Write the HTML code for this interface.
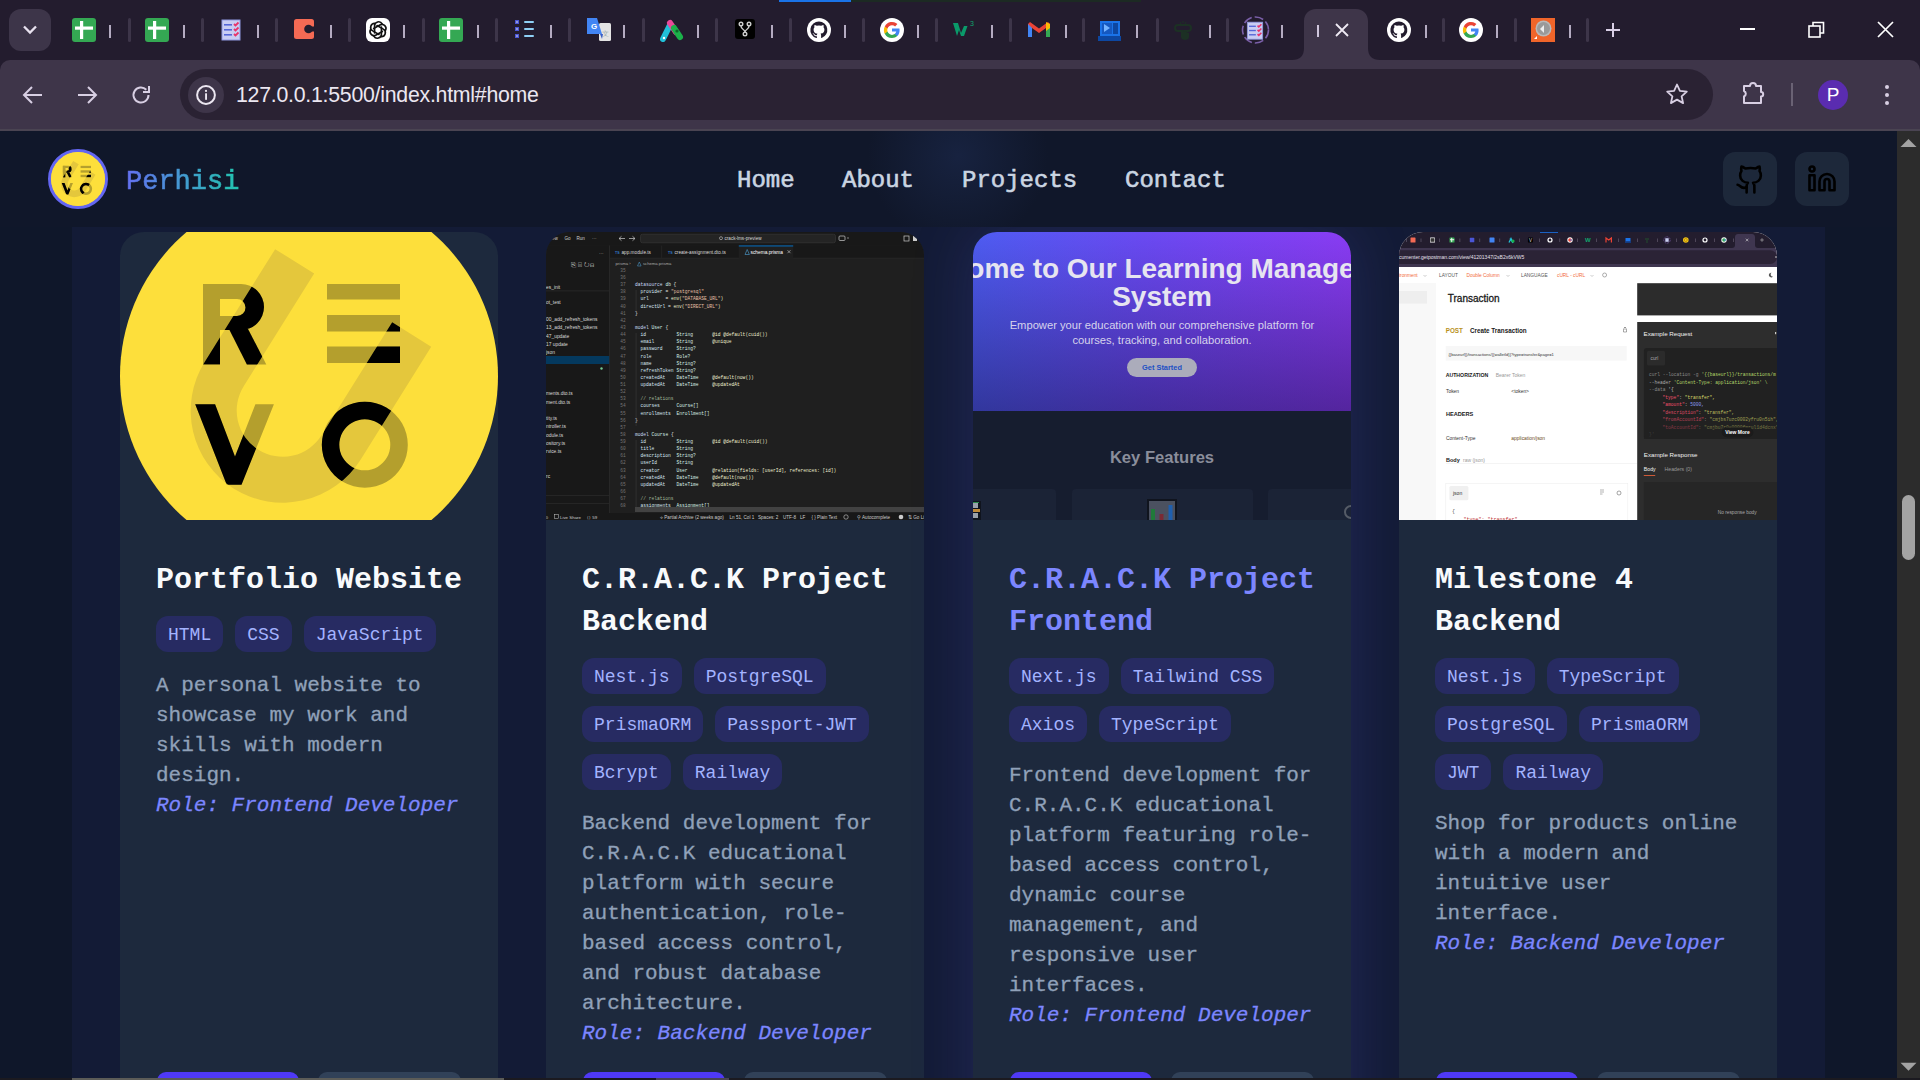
<!DOCTYPE html>
<html><head><meta charset="utf-8">
<style>
*{box-sizing:border-box;margin:0;padding:0}
html,body{width:1920px;height:1080px;overflow:hidden}
body{position:relative;background:#231c2e;font-family:"Liberation Sans",sans-serif}
.abs{position:absolute}
/* chrome */
#tabstrip{position:absolute;left:0;top:0;width:1920px;height:60px;background:#231c2e}
#toolbar{position:absolute;left:0;top:60px;width:1920px;height:71px;background:#3e3549;border-radius:10px 10px 0 0}
#omni{position:absolute;left:180px;top:69px;width:1533px;height:51px;border-radius:26px;background:#2a2233}
.sep{position:absolute;top:18px;width:3px;height:24px;border-radius:1.5px;background:#3d3549}
.fav{position:absolute;top:18px;width:24px;height:24px}
.tfrag{position:absolute;top:25px;width:2.2px;height:12.8px;background:#d8d0e6;opacity:.8}
/* page */
#page{position:absolute;left:0;top:131px;width:1897px;height:949px;background:#0f172a;overflow:hidden;font-family:"Liberation Mono",monospace}
#nav{position:absolute;left:0;top:0;width:1897px;height:96px;background:radial-gradient(circle 90px at 958px 25px,rgba(32,48,90,0.45),rgba(16,23,42,0)),#10172a}
.navlink{position:absolute;top:32px;font-size:24px;line-height:36px;color:#cad5e2;-webkit-text-stroke:0.6px #cad5e2}
.sbtn{position:absolute;top:21px;width:54px;height:54px;border-radius:12px;background:#1d283a}
#container{position:absolute;left:72px;top:96px;width:1753px;height:1000px;background:#131b36}
.card{position:absolute;top:101px;width:378px;height:1000px;background:#1d293d;border-radius:24px;overflow:hidden}
.img{position:absolute;left:0;top:0;width:378px;height:288px;overflow:hidden}
.body{position:absolute;left:36px;top:324px;width:308px}
.title{font-size:30px;line-height:42px;font-weight:bold;color:#f8fafc;position:relative;top:3px}
.tags{display:flex;flex-wrap:wrap;gap:12px;margin-top:18px}
.tag{font-size:18px;line-height:24px;padding:6px 12px;border-radius:12px;background:#272b62;color:#a3b3ff}
.tag span{position:relative;top:1px}
.desc{margin-top:18px;font-size:21px;line-height:30px;color:#90a1b9;-webkit-text-stroke:0.3px #90a1b9}
.desc span,.role span{position:relative;top:1px}
.role{font-size:21px;line-height:30px;color:#7c86ff;font-style:italic;-webkit-text-stroke:0.3px #7c86ff}
.btn1{position:absolute;left:37px;top:840px;height:45px;width:142px;border-radius:9px;background:#4f39f6}
.btn2{position:absolute;left:198px;top:840px;height:45px;width:143px;border-radius:9px;background:#314158}
</style></head>
<body>
<div id="tabstrip">
<div class="abs" style="left:779px;top:0;width:72px;height:2px;background:#1a73e8"></div>
<div class="abs" style="left:851px;top:0;width:290px;height:2px;background:#1c2a23"></div>
<div class="abs" style="left:9px;top:9px;width:42px;height:42px;border-radius:12px;background:#3d3549"></div>
<svg class="abs" style="left:20px;top:20px" width="20" height="20" viewBox="0 0 20 20"><path d="M4 6.5l6 6 6-6" fill="none" stroke="#e8e2ef" stroke-width="2.3"/></svg>
<div class="sep" style="left:127.9px"></div>
<div class="sep" style="left:201.3px"></div>
<div class="sep" style="left:274.7px"></div>
<div class="sep" style="left:348.1px"></div>
<div class="sep" style="left:421.5px"></div>
<div class="sep" style="left:494.9px"></div>
<div class="sep" style="left:568.3px"></div>
<div class="sep" style="left:641.7px"></div>
<div class="sep" style="left:715.1px"></div>
<div class="sep" style="left:788.5px"></div>
<div class="sep" style="left:861.9px"></div>
<div class="sep" style="left:935.3px"></div>
<div class="sep" style="left:1008.7px"></div>
<div class="sep" style="left:1082.1px"></div>
<div class="sep" style="left:1155.5px"></div>
<div class="sep" style="left:1226.0px"></div>
<div class="sep" style="left:1441.9px"></div>
<div class="sep" style="left:1513.9px"></div>
<div class="sep" style="left:1586.0px"></div>
<div class="tfrag" style="left:109.0px"></div>
<div class="tfrag" style="left:182.8px"></div>
<div class="tfrag" style="left:256.5px"></div>
<div class="tfrag" style="left:330.0px"></div>
<div class="tfrag" style="left:403.0px"></div>
<div class="tfrag" style="left:476.5px"></div>
<div class="tfrag" style="left:549.6px"></div>
<div class="tfrag" style="left:623.0px"></div>
<div class="tfrag" style="left:696.5px"></div>
<div class="tfrag" style="left:771.0px"></div>
<div class="tfrag" style="left:844.0px"></div>
<div class="tfrag" style="left:917.0px"></div>
<div class="tfrag" style="left:991.0px"></div>
<div class="tfrag" style="left:1064.6px"></div>
<div class="tfrag" style="left:1136.0px"></div>
<div class="tfrag" style="left:1208.6px"></div>
<div class="tfrag" style="left:1280.5px"></div>
<div class="tfrag" style="left:1424.6px"></div>
<div class="tfrag" style="left:1496.0px"></div>
<div class="tfrag" style="left:1568.6px"></div>
<svg class="abs" style="left:72.0px;top:18px" width="24" height="24" viewBox="0 0 24 24"><rect x="0" y="0" width="24" height="24" rx="3" fill="#34a853"/><rect x="3" y="8.5" width="18" height="3.2" fill="#fff"/><rect x="8" y="3" width="3.2" height="18" fill="#fff"/></svg>
<svg class="abs" style="left:145.4px;top:18px" width="24" height="24" viewBox="0 0 24 24"><rect x="0" y="0" width="24" height="24" rx="3" fill="#34a853"/><rect x="3" y="8.5" width="18" height="3.2" fill="#fff"/><rect x="8" y="3" width="3.2" height="18" fill="#fff"/></svg>
<svg class="abs" style="left:221.0px;top:18px" width="24" height="24" viewBox="0 0 24 24"><rect x="1" y="2" width="18" height="20" fill="#c9cdf3"/><rect x="1" y="2" width="18" height="20" fill="none" stroke="#8f97e0" stroke-width="1"/><rect x="3" y="6" width="8" height="1.6" fill="#5567d8"/><rect x="3" y="11" width="8" height="1.6" fill="#5567d8"/><rect x="3" y="16" width="8" height="1.6" fill="#5567d8"/><path d="M13 6l1.5 1.5 3-3M13 11l1.5 1.5 3-3M13 16l1.5 1.5 3-3" fill="none" stroke="#e8336b" stroke-width="1.8"/></svg>
<svg class="abs" style="left:294.0px;top:18px" width="24" height="24" viewBox="0 0 24 24"><rect x="0" y="1" width="20" height="20" rx="2.5" fill="#f46a54"/><circle cx="14.5" cy="11" r="4.3" fill="#231c2e"/><rect x="14.5" y="8.5" width="6" height="5" fill="#231c2e"/></svg>
<svg class="abs" style="left:366.0px;top:18px" width="24" height="24" viewBox="0 0 24 24"><rect x="0" y="0" width="24" height="24" rx="6" fill="#fff"/><g transform="translate(12 12) scale(1.22) translate(-12 -12)" fill="none" stroke="#111" stroke-width="1.35" stroke-linecap="round"><path d="M9.2 14.5V8.6a3.3 3.3 0 0 1 6.2-1.6" transform="rotate(0 12 12)"/><path d="M9.2 14.5V8.6a3.3 3.3 0 0 1 6.2-1.6" transform="rotate(60 12 12)"/><path d="M9.2 14.5V8.6a3.3 3.3 0 0 1 6.2-1.6" transform="rotate(120 12 12)"/><path d="M9.2 14.5V8.6a3.3 3.3 0 0 1 6.2-1.6" transform="rotate(180 12 12)"/><path d="M9.2 14.5V8.6a3.3 3.3 0 0 1 6.2-1.6" transform="rotate(240 12 12)"/><path d="M9.2 14.5V8.6a3.3 3.3 0 0 1 6.2-1.6" transform="rotate(300 12 12)"/></g></svg>
<svg class="abs" style="left:439.0px;top:18px" width="24" height="24" viewBox="0 0 24 24"><rect x="0" y="0" width="24" height="24" rx="3" fill="#34a853"/><rect x="3" y="8.5" width="18" height="3.2" fill="#fff"/><rect x="8" y="3" width="3.2" height="18" fill="#fff"/></svg>
<svg class="abs" style="left:515.0px;top:18px" width="24" height="24" viewBox="0 0 24 24"><rect x="0" y="2" width="4" height="4" fill="#4a56d6"/><rect x="0" y="9" width="4" height="4" fill="#4a56d6"/><rect x="0" y="16" width="4" height="4" fill="#4a56d6"/><rect x="1.3" y="3.3" width="1.4" height="1.4" fill="#ddd"/><rect x="1.3" y="10.3" width="1.4" height="1.4" fill="#ddd"/><rect x="1.3" y="17.3" width="1.4" height="1.4" fill="#ddd"/><rect x="9" y="3" width="10" height="2" rx="1" fill="#8fd0f5"/><rect x="9" y="10" width="10" height="2" rx="1" fill="#8fd0f5"/><rect x="9" y="17" width="10" height="2" rx="1" fill="#8fd0f5"/></svg>
<svg class="abs" style="left:587.0px;top:18px" width="24" height="24" viewBox="0 0 24 24"><rect x="12" y="5" width="12" height="18" rx="1.5" fill="#e4e4e4"/><path d="M0 0h10l5 16H0z" fill="#4285f4"/><path d="M13 16l2 5 1-5z" fill="#3a5fc8"/><text x="4" y="11" font-size="8" font-family="Liberation Sans" font-weight="bold" fill="#fff">G</text><text x="15" y="18" font-size="7" font-family="Liberation Sans" fill="#9aa">文</text></svg>
<svg class="abs" style="left:660.0px;top:18px" width="24" height="24" viewBox="0 0 24 24"><path d="M3 21L10 7" stroke="#21c0d8" stroke-width="6" stroke-linecap="round"/><path d="M10 5L16 14" stroke="#e94a9a" stroke-width="6" stroke-linecap="round"/><path d="M14 10L20 19" stroke="#1bb24a" stroke-width="6" stroke-linecap="round"/><circle cx="4" cy="20" r="1.2" fill="#fff"/><circle cx="17" cy="13" r="1.6" fill="#0a6b2a"/></svg>
<svg class="abs" style="left:735.0px;top:18px" width="24" height="24" viewBox="0 0 24 24"><rect x="0" y="1" width="20" height="20" rx="3" fill="#000"/><g fill="none" stroke="#ccc" stroke-width="1.4"><circle cx="6" cy="6" r="1.8"/><circle cx="14" cy="6" r="1.8"/><circle cx="10" cy="16" r="1.8"/><path d="M6 8c0 4 4 3 4 6M14 8c0 4-4 3-4 6"/></g></svg>
<svg class="abs" style="left:807.0px;top:18px" width="24" height="24" viewBox="0 0 24 24"><circle cx="12" cy="12" r="12" fill="#fff"/><path d="M12 3.5a8.5 8.5 0 0 0-2.7 16.6c.4.1.6-.2.6-.4v-1.5c-2.4.5-2.9-1.1-2.9-1.1-.4-1-1-1.3-1-1.3-.8-.5.1-.5.1-.5.9.1 1.3.9 1.3.9.8 1.3 2 1 2.5.7.1-.6.3-1 .6-1.2-1.9-.2-3.9-.9-3.9-4.2 0-.9.3-1.7.9-2.3-.1-.2-.4-1.1.1-2.3 0 0 .7-.2 2.3.9a8 8 0 0 1 4.2 0c1.6-1.1 2.3-.9 2.3-.9.5 1.2.2 2.1.1 2.3.5.6.9 1.4.9 2.3 0 3.3-2 4-3.9 4.2.3.3.6.8.6 1.6v2.3c0 .2.2.5.6.4A8.5 8.5 0 0 0 12 3.5z" fill="#231c2e"/></svg>
<svg class="abs" style="left:880.0px;top:18px" width="24" height="24" viewBox="0 0 24 24"><circle cx="12" cy="12" r="12" fill="#fff"/><path d="M19.6 12.2c0-.6-.1-1.1-.2-1.6H12v3h4.3a3.7 3.7 0 0 1-1.6 2.4v2h2.6c1.5-1.4 2.3-3.4 2.3-5.8z" fill="#4285f4"/><path d="M12 20c2.2 0 4-.7 5.3-1.9l-2.6-2c-.7.5-1.6.8-2.7.8-2.1 0-3.9-1.4-4.5-3.3H4.8v2.1A8 8 0 0 0 12 20z" fill="#34a853"/><path d="M7.5 13.6a4.8 4.8 0 0 1 0-3.1V8.4H4.8a8 8 0 0 0 0 7.3z" fill="#fbbc05"/><path d="M12 7.2c1.2 0 2.3.4 3.1 1.2l2.3-2.3A8 8 0 0 0 4.8 8.4l2.7 2.1C8.1 8.6 9.9 7.2 12 7.2z" fill="#ea4335"/></svg>
<svg class="abs" style="left:953.0px;top:18px" width="24" height="24" viewBox="0 0 24 24"><path d="M0 5h5l3 10 3-7h3.5l-3.5 10 2 0-2 0h-3l-2-6-2 6h0z" fill="#0a9a6a"/><path d="M1 5l6 13h3l3-8 3 8 5-13" fill="none" stroke="#10a56f" stroke-width="0"/><text x="17" y="8" font-size="7" font-family="Liberation Sans" fill="#10a56f">3</text></svg>
<svg class="abs" style="left:1027.0px;top:18px" width="24" height="24" viewBox="0 0 24 24"><path d="M1 6v13h4V10l7 5 7-5v9h4V6l-2-2-9 6.5L3 4z" fill="#ea4335"/><path d="M1 6v13h4V10z" fill="#4285f4"/><path d="M23 6v13h-4V10z" fill="#34a853"/><path d="M19 4l4 2v4l-4 3z" fill="#fbbc05"/></svg>
<svg class="abs" style="left:1097.0px;top:18px" width="24" height="24" viewBox="0 0 24 24"><rect x="3" y="3" width="20" height="15" fill="#1a73e8"/><rect x="5" y="5" width="10" height="11" fill="#1558c0"/><path d="M7 6l6 4-6 4z" fill="#74b3ff"/><rect x="16" y="5" width="5" height="11" fill="#0d47a1"/><rect x="1" y="18" width="24" height="5" fill="#0d47a1"/></svg>
<svg class="abs" style="left:1173.0px;top:18px" width="24" height="24" viewBox="0 0 24 24"><rect x="2" y="7" width="16" height="6" rx="3" fill="none" stroke="#1c3024" stroke-width="2"/><path d="M8 12v7c0 2 2 3 4 3s4-1 4-3v-4" fill="#1c3024"/><path d="M7 4l1 2M10 3v2M13 4l-1 2" stroke="#1c3024" stroke-width="1"/></svg>
<svg class="abs" style="left:1387.0px;top:18px" width="24" height="24" viewBox="0 0 24 24"><circle cx="12" cy="12" r="12" fill="#fff"/><path d="M12 3.5a8.5 8.5 0 0 0-2.7 16.6c.4.1.6-.2.6-.4v-1.5c-2.4.5-2.9-1.1-2.9-1.1-.4-1-1-1.3-1-1.3-.8-.5.1-.5.1-.5.9.1 1.3.9 1.3.9.8 1.3 2 1 2.5.7.1-.6.3-1 .6-1.2-1.9-.2-3.9-.9-3.9-4.2 0-.9.3-1.7.9-2.3-.1-.2-.4-1.1.1-2.3 0 0 .7-.2 2.3.9a8 8 0 0 1 4.2 0c1.6-1.1 2.3-.9 2.3-.9.5 1.2.2 2.1.1 2.3.5.6.9 1.4.9 2.3 0 3.3-2 4-3.9 4.2.3.3.6.8.6 1.6v2.3c0 .2.2.5.6.4A8.5 8.5 0 0 0 12 3.5z" fill="#231c2e"/></svg>
<svg class="abs" style="left:1459.0px;top:18px" width="24" height="24" viewBox="0 0 24 24"><circle cx="12" cy="12" r="12" fill="#fff"/><path d="M19.6 12.2c0-.6-.1-1.1-.2-1.6H12v3h4.3a3.7 3.7 0 0 1-1.6 2.4v2h2.6c1.5-1.4 2.3-3.4 2.3-5.8z" fill="#4285f4"/><path d="M12 20c2.2 0 4-.7 5.3-1.9l-2.6-2c-.7.5-1.6.8-2.7.8-2.1 0-3.9-1.4-4.5-3.3H4.8v2.1A8 8 0 0 0 12 20z" fill="#34a853"/><path d="M7.5 13.6a4.8 4.8 0 0 1 0-3.1V8.4H4.8a8 8 0 0 0 0 7.3z" fill="#fbbc05"/><path d="M12 7.2c1.2 0 2.3.4 3.1 1.2l2.3-2.3A8 8 0 0 0 4.8 8.4l2.7 2.1C8.1 8.6 9.9 7.2 12 7.2z" fill="#ea4335"/></svg>
<svg class="abs" style="left:1531.0px;top:18px" width="24" height="24" viewBox="0 0 24 24"><rect x="0" y="0" width="24" height="24" fill="#f0652a"/><circle cx="12.5" cy="10.5" r="8" fill="#b9b9b9"/><circle cx="12.5" cy="10.5" r="6.5" fill="#9a9a9a"/><path d="M9 11l4-4v8z" fill="#eee"/><path d="M3 21l3-3v3z" fill="#fff"/></svg>
<svg class="abs" style="left:1240.5px;top:15px" width="30" height="30" viewBox="0 0 30 30"><circle cx="14.5" cy="15" r="13" fill="none" stroke="#7a5fa8" stroke-width="1.6" stroke-dasharray="9 3"/><g transform="translate(5.5 5.5) scale(0.85)"><rect x="1" y="2" width="18" height="20" fill="#c9cdf3"/><rect x="1" y="2" width="18" height="20" fill="none" stroke="#8f97e0" stroke-width="1"/><rect x="3" y="6" width="8" height="1.6" fill="#5567d8"/><rect x="3" y="11" width="8" height="1.6" fill="#5567d8"/><rect x="3" y="16" width="8" height="1.6" fill="#5567d8"/><path d="M13 6l1.5 1.5 3-3M13 11l1.5 1.5 3-3M13 16l1.5 1.5 3-3" fill="none" stroke="#e8336b" stroke-width="1.8"/></g></svg>
<svg class="abs" style="left:1292px;top:9px" width="88" height="51" viewBox="0 0 88 51"><path d="M0 51c8 0 12-4 12-12V12C12 5 17 0 24 0h40c7 0 12 5 12 12v27c0 8 4 12 12 12z" fill="#3e3549"/></svg>
<div class="abs" style="left:1316.5px;top:25px;width:2px;height:12px;background:#cfc6dc"></div>
<svg class="abs" style="left:1334px;top:22px" width="16" height="16" viewBox="0 0 16 16"><path d="M2 2l12 12M14 2L2 14" stroke="#efeaf3" stroke-width="1.8"/></svg>
<svg class="abs" style="left:1605px;top:22px" width="16" height="16" viewBox="0 0 16 16"><path d="M8 1v14M1 8h14" stroke="#d9cfe6" stroke-width="2"/></svg>
<div class="abs" style="left:1740px;top:28px;width:15px;height:2px;background:#fff"></div>
<svg class="abs" style="left:1808px;top:21px" width="17" height="17" viewBox="0 0 17 17"><rect x="1" y="5" width="11" height="11" fill="none" stroke="#fff" stroke-width="1.6"/><path d="M5 5V1.5h10.5V12H12" fill="none" stroke="#fff" stroke-width="1.6"/></svg>
<svg class="abs" style="left:1877px;top:21px" width="17" height="17" viewBox="0 0 17 17"><path d="M1 1l15 15M16 1L1 16" stroke="#fff" stroke-width="1.7"/></svg>
</div>
<div id="toolbar"></div>
<div class="abs" style="left:0;top:129px;width:1920px;height:2px;background:#4a4452"></div>
<div id="omni"></div>
<svg class="abs" style="left:22px;top:84px" width="22" height="22" viewBox="0 0 22 22"><path d="M20 11H3M10 3l-8 8 8 8" fill="none" stroke="#d8cfe3" stroke-width="2"/></svg>
<svg class="abs" style="left:76px;top:84px" width="22" height="22" viewBox="0 0 22 22"><path d="M2 11h17M12 3l8 8-8 8" fill="none" stroke="#d8cfe3" stroke-width="2"/></svg>
<svg class="abs" style="left:130px;top:84px" width="22" height="22" viewBox="0 0 22 22"><path d="M18.5 11a7.5 7.5 0 1 1-2.2-5.3" fill="none" stroke="#d8cfe3" stroke-width="2"/><path d="M19 2v6h-6" fill="none" stroke="#d8cfe3" stroke-width="2"/></svg>
<div class="abs" style="left:187.5px;top:76.5px;width:36px;height:36px;border-radius:18px;background:#3e3549"></div>
<svg class="abs" style="left:195.5px;top:85px" width="20" height="20" viewBox="0 0 20 20"><circle cx="10" cy="10" r="8.9" fill="none" stroke="#ece7f1" stroke-width="2"/><rect x="9.1" y="8.3" width="1.9" height="6.5" fill="#ece7f1"/><circle cx="10" cy="5.9" r="1.1" fill="#ece7f1"/></svg>
<div class="abs" id="url" style="left:236px;top:82px;font-size:21.3px;letter-spacing:-0.25px;line-height:26px;color:#ece7f1;font-family:'Liberation Sans',sans-serif">127.0.0.1:5500/index.html#home</div>
<svg class="abs" style="left:1665px;top:82px" width="24" height="24" viewBox="0 0 24 24"><path d="M12 2.5l2.9 6.4 6.9.7-5.2 4.7 1.5 6.8L12 17.6l-6.1 3.5 1.5-6.8-5.2-4.7 6.9-.7z" fill="none" stroke="#d8cfe3" stroke-width="1.8" stroke-linejoin="round"/></svg>
<svg class="abs" style="left:1741px;top:81px" width="26" height="26" viewBox="0 0 26 26"><path d="M3 5h6a3 3 0 0 1 6 0h5v6a2.2 2.2 0 0 1 0 4.4V22H3v-6.5a3 3 0 0 0 0-5.5z" fill="none" stroke="#d8cfe3" stroke-width="2" stroke-linejoin="round"/></svg>
<div class="abs" style="left:1791px;top:83px;width:2px;height:23px;background:#6a6274"></div>
<div class="abs" style="left:1818px;top:80px;width:30px;height:30px;border-radius:15px;background:#5a2cb0"></div>
<div class="abs" style="left:1818px;top:80px;width:30px;height:30px;line-height:30px;text-align:center;color:#fff;font-size:19px;font-family:'Liberation Sans',sans-serif">P</div>
<div class="abs" style="left:1884.7px;top:84.7px;width:4.6px;height:4.6px;border-radius:50%;background:#d8cfe3"></div>
<div class="abs" style="left:1884.7px;top:92.7px;width:4.6px;height:4.6px;border-radius:50%;background:#d8cfe3"></div>
<div class="abs" style="left:1884.7px;top:100.7px;width:4.6px;height:4.6px;border-radius:50%;background:#d8cfe3"></div>

<div id="page">
  <div id="container"></div>
  <!-- cards -->
  <div class="card" style="left:120px">
    <div class="img" id="img1"><svg width="378" height="288" viewBox="0 0 378 288" style="display:block"><defs><clipPath id="uclip"><path d="M70.69999999999999 45.7V178.7A92 92 0 0 0 254.7 178.7V45.7H208.7V178.7A46 46 0 0 1 116.69999999999999 178.7V45.7Z" transform="rotate(32 162.7 178.7)"/></clipPath></defs><circle cx="189" cy="144" r="189" fill="#fddf3b"/><path d="M70.69999999999999 45.7V178.7A92 92 0 0 0 254.7 178.7V45.7H208.7V178.7A46 46 0 0 1 116.69999999999999 178.7V45.7Z" transform="rotate(32 162.7 178.7)" fill="#e4c73c"/><g fill="#b49f2d"><rect x="83" y="52" width="17" height="80.4"/><path d="M83 52H121A23 23 0 0 1 121 98H83ZM100 67H117A8.5 8.5 0 0 1 117 84H100Z" fill-rule="evenodd"/><path d="M109 97L128 97L146.3 132.4L126.9 132.4Z"/><rect x="207" y="52" width="73" height="15.5"/><rect x="207" y="83" width="73" height="16.5"/><rect x="207" y="114.5" width="73" height="16.5"/><path d="M75.2 172.3L95.1 172.3L115 224.6L135.4 172.3L153.9 172.3L121.5 252.8L106.7 252.8Z"/><path d="M244.8 169.8a43 43 0 1 0 0.01 0ZM244.8 187.3a25.5 25.5 0 1 1-0.01 0Z" fill-rule="evenodd"/></g><g fill="#000" clip-path="url(#uclip)"><rect x="83" y="52" width="17" height="80.4"/><path d="M83 52H121A23 23 0 0 1 121 98H83ZM100 67H117A8.5 8.5 0 0 1 117 84H100Z" fill-rule="evenodd"/><path d="M109 97L128 97L146.3 132.4L126.9 132.4Z"/><rect x="207" y="52" width="73" height="15.5"/><rect x="207" y="83" width="73" height="16.5"/><rect x="207" y="114.5" width="73" height="16.5"/><path d="M75.2 172.3L95.1 172.3L115 224.6L135.4 172.3L153.9 172.3L121.5 252.8L106.7 252.8Z"/><path d="M244.8 169.8a43 43 0 1 0 0.01 0ZM244.8 187.3a25.5 25.5 0 1 1-0.01 0Z" fill-rule="evenodd"/></g></svg></div>
    <div class="body">
      <div class="title">Portfolio Website</div>
      <div class="tags"><div class="tag"><span>HTML</span></div><div class="tag"><span>CSS</span></div><div class="tag"><span>JavaScript</span></div></div>
      <div class="desc"><span>A personal website to showcase my work and skills with modern design.</span></div>
      <div class="role"><span>Role: Frontend Developer</span></div>
    </div>
    <div class="btn1"></div><div class="btn2"></div>
  </div>
  <div class="card" style="left:546px">
    <div class="img" id="img2"><svg width="378" height="288" viewBox="0 0 378 288" style="display:block"><rect width="378" height="288" fill="#1f1f1f"/><rect width="378" height="13.5" fill="#181818"/><text x="6.0" y="8.3" font-size="4.60" fill="#cccccc" text-anchor="start" font-weight="normal" font-family="Liberation Sans">ew</text><text x="18.5" y="8.3" font-size="4.60" fill="#cccccc" text-anchor="start" font-weight="normal" font-family="Liberation Sans">Go</text><text x="30.5" y="8.3" font-size="4.60" fill="#cccccc" text-anchor="start" font-weight="normal" font-family="Liberation Sans">Run</text><text x="46.0" y="8.3" font-size="4.60" fill="#cccccc" text-anchor="start" font-weight="normal" font-family="Liberation Sans">···</text><path d="M73 6.5h6M73 6.5l2.5-2.2M73 6.5l2.5 2.2M83 6.5h6M89 6.5l-2.5-2.2M89 6.5l-2.5 2.2" stroke="#cccccc" stroke-width="0.7" fill="none"/><rect x="94.5" y="2.2" width="195" height="8.6" rx="2" fill="#242424" stroke="#3a3a3a" stroke-width="0.6"/><circle cx="175" cy="6.2" r="1.5" fill="none" stroke="#ccc" stroke-width="0.6"/><text x="178.5" y="8.2" font-size="4.60" fill="#d8d8d8" text-anchor="start" font-weight="normal" font-family="Liberation Sans">crack-lms-preview</text><rect x="293" y="4" width="6" height="4.5" rx="1" fill="none" stroke="#ccc" stroke-width="0.7"/><path d="M301 6h2" stroke="#ccc" stroke-width="0.6"/><rect x="358" y="4" width="5" height="5" fill="none" stroke="#ccc" stroke-width="0.7"/><rect x="367" y="4" width="4" height="5" fill="#ccc"/><rect x="0" y="13.5" width="63.2" height="267.5" fill="#181818"/><rect x="63.2" y="13.5" width="0.8" height="267.5" fill="#2b2b2b"/><text x="53.0" y="23.0" font-size="4.60" fill="#cccccc" text-anchor="start" font-weight="normal" font-family="Liberation Sans">···</text><text x="25.0" y="35.0" font-size="6.50" fill="#dddddd" text-anchor="start" font-weight="normal" font-family="Liberation Sans">⎘ ⌸ ↻ ⊟</text><rect x="0" y="58.5" width="63" height="0.8" fill="#2b2b2b"/><text x="0.0" y="56.5" font-size="4.90" fill="#dadada" text-anchor="start" font-weight="normal" font-family="Liberation Sans">es_init</text><text x="0.0" y="72.0" font-size="4.90" fill="#dadada" text-anchor="start" font-weight="normal" font-family="Liberation Sans">ot_test</text><text x="0.0" y="89.0" font-size="4.90" fill="#dadada" text-anchor="start" font-weight="normal" font-family="Liberation Sans">00_add_refresh_tokens</text><text x="0.0" y="97.0" font-size="4.90" fill="#dadada" text-anchor="start" font-weight="normal" font-family="Liberation Sans">13_add_refresh_tokens</text><text x="0.0" y="105.5" font-size="4.90" fill="#dadada" text-anchor="start" font-weight="normal" font-family="Liberation Sans">47_update</text><text x="0.0" y="114.0" font-size="4.90" fill="#dadada" text-anchor="start" font-weight="normal" font-family="Liberation Sans">17 update</text><text x="0.0" y="122.0" font-size="4.90" fill="#dadada" text-anchor="start" font-weight="normal" font-family="Liberation Sans">json</text><rect x="0" y="124" width="63.2" height="8" fill="#04395e"/><circle cx="55.5" cy="136.5" r="1.2" fill="#73c991"/><text x="0.0" y="163.0" font-size="4.90" fill="#dadada" text-anchor="start" font-weight="normal" font-family="Liberation Sans">ments.dto.ts</text><text x="0.0" y="171.5" font-size="4.90" fill="#dadada" text-anchor="start" font-weight="normal" font-family="Liberation Sans">ment.dto.ts</text><text x="0.0" y="188.0" font-size="4.90" fill="#dadada" text-anchor="start" font-weight="normal" font-family="Liberation Sans">tity.ts</text><text x="0.0" y="196.0" font-size="4.90" fill="#dadada" text-anchor="start" font-weight="normal" font-family="Liberation Sans">ntroller.ts</text><text x="0.0" y="204.5" font-size="4.90" fill="#dadada" text-anchor="start" font-weight="normal" font-family="Liberation Sans">odule.ts</text><text x="0.0" y="212.5" font-size="4.90" fill="#dadada" text-anchor="start" font-weight="normal" font-family="Liberation Sans">ository.ts</text><text x="0.0" y="220.5" font-size="4.90" fill="#dadada" text-anchor="start" font-weight="normal" font-family="Liberation Sans">rvice.ts</text><text x="0.0" y="245.5" font-size="4.90" fill="#dadada" text-anchor="start" font-weight="normal" font-family="Liberation Sans">rc</text><rect x="0" y="263" width="63" height="0.7" fill="#2b2b2b"/><rect x="0" y="271" width="63" height="0.7" fill="#2b2b2b"/><rect x="64" y="13.5" width="314" height="12.5" fill="#181818"/><rect x="64" y="25.8" width="314" height="0.6" fill="#2b2b2b"/><text x="69.0" y="21.5" font-size="3.60" fill="#3178c6" text-anchor="start" font-weight="bold" font-family="Liberation Sans">TS</text><text x="75.5" y="21.8" font-size="4.70" fill="#d8d8d8" text-anchor="start" font-weight="normal" font-family="Liberation Sans">app.module.ts</text><rect x="115.5" y="13.5" width="0.6" height="12.3" fill="#2b2b2b"/><text x="122.0" y="21.5" font-size="3.60" fill="#3178c6" text-anchor="start" font-weight="bold" font-family="Liberation Sans">TS</text><text x="128.5" y="21.8" font-size="4.70" fill="#d8d8d8" text-anchor="start" font-weight="normal" font-family="Liberation Sans">create-assignment.dto.ts</text><rect x="192.8" y="13.5" width="54.4" height="13" fill="#1f1f1f"/><rect x="192.8" y="13.5" width="54.4" height="0.9" fill="#0078d4"/><path d="M199 22.5l2.2-5 2.2 5z" fill="none" stroke="#4fa3d8" stroke-width="0.6"/><text x="204.5" y="21.8" font-size="4.80" fill="#ffffff" text-anchor="start" font-weight="normal" font-family="Liberation Sans">schema.prisma</text><path d="M241.5 18.2l3 3M244.5 18.2l-3 3" stroke="#ccc" stroke-width="0.6"/><text x="69.5" y="33.2" font-size="4.20" fill="#a9a9a9" text-anchor="start" font-weight="normal" font-family="Liberation Sans">prisma  ›</text><path d="M91.5 34l1.8-4 1.8 4z" fill="none" stroke="#4fa3d8" stroke-width="0.5"/><text x="97.0" y="33.2" font-size="4.20" fill="#a9a9a9" text-anchor="start" font-weight="normal" font-family="Liberation Sans">schema.prisma</text><text x="79.7" y="39.9" font-size="4.50" fill="#767676" text-anchor="end" font-weight="normal" font-family="Liberation Mono">35</text><text x="79.7" y="47.0" font-size="4.50" fill="#767676" text-anchor="end" font-weight="normal" font-family="Liberation Mono">36</text><text x="79.7" y="54.2" font-size="4.50" fill="#767676" text-anchor="end" font-weight="normal" font-family="Liberation Mono">37</text><text x="89.0" y="54.2" font-size="4.60" fill="#c8daf5" text-anchor="start" font-weight="normal" font-family="Liberation Mono">datasource</text><text x="119.4" y="54.2" font-size="4.60" fill="#d8efe8" text-anchor="start" font-weight="normal" font-family="Liberation Mono">db</text><text x="127.6" y="54.2" font-size="4.60" fill="#e4e4e4" text-anchor="start" font-weight="normal" font-family="Liberation Mono">{</text><text x="79.7" y="61.3" font-size="4.50" fill="#767676" text-anchor="end" font-weight="normal" font-family="Liberation Mono">38</text><text x="94.5" y="61.3" font-size="4.60" fill="#d8e6f2" text-anchor="start" font-weight="normal" font-family="Liberation Mono">provider</text><text x="119.4" y="61.3" font-size="4.60" fill="#e4e4e4" text-anchor="start" font-weight="normal" font-family="Liberation Mono">=</text><text x="124.9" y="61.3" font-size="4.60" fill="#e8c0a8" text-anchor="start" font-weight="normal" font-family="Liberation Mono">&quot;postgresql&quot;</text><text x="79.7" y="68.4" font-size="4.50" fill="#767676" text-anchor="end" font-weight="normal" font-family="Liberation Mono">39</text><text x="94.5" y="68.4" font-size="4.60" fill="#d8e6f2" text-anchor="start" font-weight="normal" font-family="Liberation Mono">url</text><text x="119.4" y="68.4" font-size="4.60" fill="#e4e4e4" text-anchor="start" font-weight="normal" font-family="Liberation Mono">=</text><text x="124.9" y="68.4" font-size="4.60" fill="#eeeed0" text-anchor="start" font-weight="normal" font-family="Liberation Mono">env(</text><text x="135.9" y="68.4" font-size="4.60" fill="#e8c0a8" text-anchor="start" font-weight="normal" font-family="Liberation Mono">&quot;DATABASE_URL&quot;</text><text x="174.6" y="68.4" font-size="4.60" fill="#eeeed0" text-anchor="start" font-weight="normal" font-family="Liberation Mono">)</text><text x="79.7" y="75.5" font-size="4.50" fill="#767676" text-anchor="end" font-weight="normal" font-family="Liberation Mono">40</text><text x="94.5" y="75.5" font-size="4.60" fill="#d8e6f2" text-anchor="start" font-weight="normal" font-family="Liberation Mono">directUrl</text><text x="122.1" y="75.5" font-size="4.60" fill="#e4e4e4" text-anchor="start" font-weight="normal" font-family="Liberation Mono">=</text><text x="127.6" y="75.5" font-size="4.60" fill="#eeeed0" text-anchor="start" font-weight="normal" font-family="Liberation Mono">env(</text><text x="138.7" y="75.5" font-size="4.60" fill="#e8c0a8" text-anchor="start" font-weight="normal" font-family="Liberation Mono">&quot;DIRECT_URL&quot;</text><text x="171.8" y="75.5" font-size="4.60" fill="#eeeed0" text-anchor="start" font-weight="normal" font-family="Liberation Mono">)</text><text x="79.7" y="82.7" font-size="4.50" fill="#767676" text-anchor="end" font-weight="normal" font-family="Liberation Mono">41</text><text x="89.0" y="82.7" font-size="4.60" fill="#e4e4e4" text-anchor="start" font-weight="normal" font-family="Liberation Mono">}</text><text x="79.7" y="89.8" font-size="4.50" fill="#767676" text-anchor="end" font-weight="normal" font-family="Liberation Mono">42</text><text x="79.7" y="96.9" font-size="4.50" fill="#767676" text-anchor="end" font-weight="normal" font-family="Liberation Mono">43</text><text x="89.0" y="96.9" font-size="4.60" fill="#c8daf5" text-anchor="start" font-weight="normal" font-family="Liberation Mono">model</text><text x="105.6" y="96.9" font-size="4.60" fill="#d8efe8" text-anchor="start" font-weight="normal" font-family="Liberation Mono">User</text><text x="119.4" y="96.9" font-size="4.60" fill="#e4e4e4" text-anchor="start" font-weight="normal" font-family="Liberation Mono">{</text><text x="79.7" y="104.1" font-size="4.50" fill="#767676" text-anchor="end" font-weight="normal" font-family="Liberation Mono">44</text><text x="94.5" y="104.1" font-size="4.60" fill="#d8e6f2" text-anchor="start" font-weight="normal" font-family="Liberation Mono">id</text><text x="130.4" y="104.1" font-size="4.60" fill="#d8efe8" text-anchor="start" font-weight="normal" font-family="Liberation Mono">String</text><text x="166.3" y="104.1" font-size="4.60" fill="#eeeed0" text-anchor="start" font-weight="normal" font-family="Liberation Mono">@id @default(cuid())</text><text x="79.7" y="111.2" font-size="4.50" fill="#767676" text-anchor="end" font-weight="normal" font-family="Liberation Mono">45</text><text x="94.5" y="111.2" font-size="4.60" fill="#d8e6f2" text-anchor="start" font-weight="normal" font-family="Liberation Mono">email</text><text x="130.4" y="111.2" font-size="4.60" fill="#d8efe8" text-anchor="start" font-weight="normal" font-family="Liberation Mono">String</text><text x="166.3" y="111.2" font-size="4.60" fill="#eeeed0" text-anchor="start" font-weight="normal" font-family="Liberation Mono">@unique</text><text x="79.7" y="118.3" font-size="4.50" fill="#767676" text-anchor="end" font-weight="normal" font-family="Liberation Mono">46</text><text x="94.5" y="118.3" font-size="4.60" fill="#d8e6f2" text-anchor="start" font-weight="normal" font-family="Liberation Mono">password</text><text x="130.4" y="118.3" font-size="4.60" fill="#d8efe8" text-anchor="start" font-weight="normal" font-family="Liberation Mono">String?</text><text x="79.7" y="125.5" font-size="4.50" fill="#767676" text-anchor="end" font-weight="normal" font-family="Liberation Mono">47</text><text x="94.5" y="125.5" font-size="4.60" fill="#d8e6f2" text-anchor="start" font-weight="normal" font-family="Liberation Mono">role</text><text x="130.4" y="125.5" font-size="4.60" fill="#d8efe8" text-anchor="start" font-weight="normal" font-family="Liberation Mono">Role?</text><text x="79.7" y="132.6" font-size="4.50" fill="#767676" text-anchor="end" font-weight="normal" font-family="Liberation Mono">48</text><text x="94.5" y="132.6" font-size="4.60" fill="#d8e6f2" text-anchor="start" font-weight="normal" font-family="Liberation Mono">name</text><text x="130.4" y="132.6" font-size="4.60" fill="#d8efe8" text-anchor="start" font-weight="normal" font-family="Liberation Mono">String?</text><text x="79.7" y="139.7" font-size="4.50" fill="#767676" text-anchor="end" font-weight="normal" font-family="Liberation Mono">49</text><text x="94.5" y="139.7" font-size="4.60" fill="#d8e6f2" text-anchor="start" font-weight="normal" font-family="Liberation Mono">refreshToken</text><text x="130.4" y="139.7" font-size="4.60" fill="#d8efe8" text-anchor="start" font-weight="normal" font-family="Liberation Mono">String?</text><text x="79.7" y="146.8" font-size="4.50" fill="#767676" text-anchor="end" font-weight="normal" font-family="Liberation Mono">50</text><text x="94.5" y="146.8" font-size="4.60" fill="#d8e6f2" text-anchor="start" font-weight="normal" font-family="Liberation Mono">createdAt</text><text x="130.4" y="146.8" font-size="4.60" fill="#d8efe8" text-anchor="start" font-weight="normal" font-family="Liberation Mono">DateTime</text><text x="166.3" y="146.8" font-size="4.60" fill="#eeeed0" text-anchor="start" font-weight="normal" font-family="Liberation Mono">@default(now())</text><text x="79.7" y="154.0" font-size="4.50" fill="#767676" text-anchor="end" font-weight="normal" font-family="Liberation Mono">51</text><text x="94.5" y="154.0" font-size="4.60" fill="#d8e6f2" text-anchor="start" font-weight="normal" font-family="Liberation Mono">updatedAt</text><text x="130.4" y="154.0" font-size="4.60" fill="#d8efe8" text-anchor="start" font-weight="normal" font-family="Liberation Mono">DateTime</text><text x="166.3" y="154.0" font-size="4.60" fill="#eeeed0" text-anchor="start" font-weight="normal" font-family="Liberation Mono">@updatedAt</text><text x="79.7" y="161.1" font-size="4.50" fill="#767676" text-anchor="end" font-weight="normal" font-family="Liberation Mono">52</text><text x="79.7" y="168.2" font-size="4.50" fill="#767676" text-anchor="end" font-weight="normal" font-family="Liberation Mono">53</text><text x="94.5" y="168.2" font-size="4.60" fill="#a0b898" text-anchor="start" font-weight="normal" font-family="Liberation Mono">// relations</text><text x="79.7" y="175.4" font-size="4.50" fill="#767676" text-anchor="end" font-weight="normal" font-family="Liberation Mono">54</text><text x="94.5" y="175.4" font-size="4.60" fill="#d8e6f2" text-anchor="start" font-weight="normal" font-family="Liberation Mono">courses</text><text x="130.4" y="175.4" font-size="4.60" fill="#d8efe8" text-anchor="start" font-weight="normal" font-family="Liberation Mono">Course[]</text><text x="79.7" y="182.5" font-size="4.50" fill="#767676" text-anchor="end" font-weight="normal" font-family="Liberation Mono">55</text><text x="94.5" y="182.5" font-size="4.60" fill="#d8e6f2" text-anchor="start" font-weight="normal" font-family="Liberation Mono">enrollments</text><text x="130.4" y="182.5" font-size="4.60" fill="#d8efe8" text-anchor="start" font-weight="normal" font-family="Liberation Mono">Enrollment[]</text><text x="79.7" y="189.6" font-size="4.50" fill="#767676" text-anchor="end" font-weight="normal" font-family="Liberation Mono">56</text><text x="89.0" y="189.6" font-size="4.60" fill="#e4e4e4" text-anchor="start" font-weight="normal" font-family="Liberation Mono">}</text><text x="79.7" y="196.8" font-size="4.50" fill="#767676" text-anchor="end" font-weight="normal" font-family="Liberation Mono">57</text><text x="79.7" y="203.9" font-size="4.50" fill="#767676" text-anchor="end" font-weight="normal" font-family="Liberation Mono">58</text><text x="89.0" y="203.9" font-size="4.60" fill="#c8daf5" text-anchor="start" font-weight="normal" font-family="Liberation Mono">model</text><text x="105.6" y="203.9" font-size="4.60" fill="#d8efe8" text-anchor="start" font-weight="normal" font-family="Liberation Mono">Course</text><text x="124.9" y="203.9" font-size="4.60" fill="#e4e4e4" text-anchor="start" font-weight="normal" font-family="Liberation Mono">{</text><text x="79.7" y="211.0" font-size="4.50" fill="#767676" text-anchor="end" font-weight="normal" font-family="Liberation Mono">59</text><text x="94.5" y="211.0" font-size="4.60" fill="#d8e6f2" text-anchor="start" font-weight="normal" font-family="Liberation Mono">id</text><text x="130.4" y="211.0" font-size="4.60" fill="#d8efe8" text-anchor="start" font-weight="normal" font-family="Liberation Mono">String</text><text x="166.3" y="211.0" font-size="4.60" fill="#eeeed0" text-anchor="start" font-weight="normal" font-family="Liberation Mono">@id @default(cuid())</text><text x="79.7" y="218.2" font-size="4.50" fill="#767676" text-anchor="end" font-weight="normal" font-family="Liberation Mono">60</text><text x="94.5" y="218.2" font-size="4.60" fill="#d8e6f2" text-anchor="start" font-weight="normal" font-family="Liberation Mono">title</text><text x="130.4" y="218.2" font-size="4.60" fill="#d8efe8" text-anchor="start" font-weight="normal" font-family="Liberation Mono">String</text><text x="79.7" y="225.3" font-size="4.50" fill="#767676" text-anchor="end" font-weight="normal" font-family="Liberation Mono">61</text><text x="94.5" y="225.3" font-size="4.60" fill="#d8e6f2" text-anchor="start" font-weight="normal" font-family="Liberation Mono">description</text><text x="130.4" y="225.3" font-size="4.60" fill="#d8efe8" text-anchor="start" font-weight="normal" font-family="Liberation Mono">String?</text><text x="79.7" y="232.4" font-size="4.50" fill="#767676" text-anchor="end" font-weight="normal" font-family="Liberation Mono">62</text><text x="94.5" y="232.4" font-size="4.60" fill="#d8e6f2" text-anchor="start" font-weight="normal" font-family="Liberation Mono">userId</text><text x="130.4" y="232.4" font-size="4.60" fill="#d8efe8" text-anchor="start" font-weight="normal" font-family="Liberation Mono">String</text><text x="79.7" y="239.5" font-size="4.50" fill="#767676" text-anchor="end" font-weight="normal" font-family="Liberation Mono">63</text><text x="94.5" y="239.5" font-size="4.60" fill="#d8e6f2" text-anchor="start" font-weight="normal" font-family="Liberation Mono">creator</text><text x="130.4" y="239.5" font-size="4.60" fill="#d8efe8" text-anchor="start" font-weight="normal" font-family="Liberation Mono">User</text><text x="166.3" y="239.5" font-size="4.60" fill="#eeeed0" text-anchor="start" font-weight="normal" font-family="Liberation Mono">@relation(fields: [userId], references: [id])</text><text x="79.7" y="246.7" font-size="4.50" fill="#767676" text-anchor="end" font-weight="normal" font-family="Liberation Mono">64</text><text x="94.5" y="246.7" font-size="4.60" fill="#d8e6f2" text-anchor="start" font-weight="normal" font-family="Liberation Mono">createdAt</text><text x="130.4" y="246.7" font-size="4.60" fill="#d8efe8" text-anchor="start" font-weight="normal" font-family="Liberation Mono">DateTime</text><text x="166.3" y="246.7" font-size="4.60" fill="#eeeed0" text-anchor="start" font-weight="normal" font-family="Liberation Mono">@default(now())</text><text x="79.7" y="253.8" font-size="4.50" fill="#767676" text-anchor="end" font-weight="normal" font-family="Liberation Mono">65</text><text x="94.5" y="253.8" font-size="4.60" fill="#d8e6f2" text-anchor="start" font-weight="normal" font-family="Liberation Mono">updatedAt</text><text x="130.4" y="253.8" font-size="4.60" fill="#d8efe8" text-anchor="start" font-weight="normal" font-family="Liberation Mono">DateTime</text><text x="166.3" y="253.8" font-size="4.60" fill="#eeeed0" text-anchor="start" font-weight="normal" font-family="Liberation Mono">@updatedAt</text><text x="79.7" y="260.9" font-size="4.50" fill="#767676" text-anchor="end" font-weight="normal" font-family="Liberation Mono">66</text><text x="79.7" y="268.1" font-size="4.50" fill="#767676" text-anchor="end" font-weight="normal" font-family="Liberation Mono">67</text><text x="94.5" y="268.1" font-size="4.60" fill="#a0b898" text-anchor="start" font-weight="normal" font-family="Liberation Mono">// relations</text><text x="79.7" y="275.2" font-size="4.50" fill="#767676" text-anchor="end" font-weight="normal" font-family="Liberation Mono">68</text><text x="94.5" y="275.2" font-size="4.60" fill="#d8e6f2" text-anchor="start" font-weight="normal" font-family="Liberation Mono">assignments</text><text x="130.4" y="275.2" font-size="4.60" fill="#d8efe8" text-anchor="start" font-weight="normal" font-family="Liberation Mono">Assignment[]</text><rect x="89.8" y="58" width="0.5" height="22" fill="#404040"/><rect x="89.8" y="101" width="0.5" height="93" fill="#404040"/><rect x="89.8" y="208" width="0.5" height="70" fill="#404040"/><rect x="89" y="275" width="289" height="5" fill="#424242"/><rect x="0" y="281" width="378" height="7" fill="#181818"/><text x="-1.0" y="286.6" font-size="4.20" fill="#cccccc" text-anchor="start" font-weight="normal" font-family="Liberation Sans">⊙</text><rect x="8.5" y="282.3" width="4" height="4" fill="none" stroke="#ccc" stroke-width="0.5"/><text x="14.0" y="286.6" font-size="4.40" fill="#cccccc" text-anchor="start" font-weight="normal" font-family="Liberation Sans">Live Share</text><text x="41.0" y="286.6" font-size="4.40" fill="#cccccc" text-anchor="start" font-weight="normal" font-family="Liberation Sans">⟨⟩ 59</text><text x="114.0" y="286.6" font-size="4.60" fill="#cccccc" text-anchor="start" font-weight="normal" font-family="Liberation Sans">⟡ Partial Archive (2 weeks ago)</text><text x="183.5" y="286.6" font-size="4.60" fill="#cccccc" text-anchor="start" font-weight="normal" font-family="Liberation Sans">Ln 51, Col 1</text><text x="212.0" y="286.6" font-size="4.60" fill="#cccccc" text-anchor="start" font-weight="normal" font-family="Liberation Sans">Spaces: 2</text><text x="237.0" y="286.6" font-size="4.60" fill="#cccccc" text-anchor="start" font-weight="normal" font-family="Liberation Sans">UTF-8</text><text x="254.0" y="286.6" font-size="4.60" fill="#cccccc" text-anchor="start" font-weight="normal" font-family="Liberation Sans">LF</text><text x="265.5" y="286.6" font-size="4.60" fill="#cccccc" text-anchor="start" font-weight="normal" font-family="Liberation Sans">{ } Plain Text</text><circle cx="300" cy="285" r="2.2" fill="none" stroke="#ccc" stroke-width="0.6"/><text x="311.0" y="286.6" font-size="4.60" fill="#cccccc" text-anchor="start" font-weight="normal" font-family="Liberation Sans">⚲ Autocomplete</text><circle cx="355" cy="285" r="2.3" fill="#ccc"/><text x="362.0" y="286.6" font-size="4.60" fill="#cccccc" text-anchor="start" font-weight="normal" font-family="Liberation Sans">⇅ Go Live</text></svg></div>
    <div class="body">
      <div class="title">C.R.A.C.K Project Backend</div>
      <div class="tags"><div class="tag"><span>Nest.js</span></div><div class="tag"><span>PostgreSQL</span></div><div class="tag"><span>PrismaORM</span></div><div class="tag"><span>Passport-JWT</span></div><div class="tag"><span>Bcrypt</span></div><div class="tag"><span>Railway</span></div></div>
      <div class="desc"><span>Backend development for C.R.A.C.K educational platform with secure authentication, role-based access control, and robust database architecture.</span></div>
      <div class="role"><span>Role: Backend Developer</span></div>
    </div>
    <div class="btn1"></div><div class="btn2"></div>
  </div>
  <div class="card" style="left:973px;box-shadow:0 0 60px 4px rgba(99,102,241,0.17)">
    <div class="img" id="img3"><div style="position:absolute;left:0;top:0;width:378px;height:288px;background:#161d2f;overflow:hidden;font-family:'Liberation Sans',sans-serif"><div style="position:absolute;left:0;top:0;width:378px;height:179px;background:linear-gradient(to bottom,rgba(0,0,0,0) 0%,rgba(10,4,40,0.42) 100%),linear-gradient(to right,#4e5cf2 0%,#6a4af3 45%,#8a3cf4 100%)"></div><div style="position:absolute;left:-200px;top:23px;width:778px;text-align:center;font-weight:bold;font-size:28px;line-height:28px;color:#e6e4f0;white-space:nowrap">Welcome to Our Learning Management<br>System</div><div style="position:absolute;left:-100px;top:86px;width:578px;text-align:center;font-size:11.2px;line-height:15px;color:#d6d2ec;white-space:nowrap">Empower your education with our comprehensive platform for<br>courses, tracking, and collaboration.</div><div style="position:absolute;left:154px;top:126px;width:70px;height:19.2px;border-radius:10px;background:#abacbb"></div><div style="position:absolute;left:154px;top:126px;width:70px;height:19.2px;line-height:19.2px;text-align:center;font-weight:bold;font-size:7.4px;color:#1d50c4">Get Started</div><div style="position:absolute;left:0;top:216px;width:378px;text-align:center;font-weight:bold;font-size:16.6px;line-height:20px;color:#8a8e9b">Key Features</div><div style="position:absolute;left:-20px;top:257px;width:103px;height:40px;border-radius:4px;background:#1b2336"></div><div style="position:absolute;left:98.5px;top:257px;width:181px;height:40px;border-radius:4px;background:#1b2336"></div><div style="position:absolute;left:295px;top:257px;width:103px;height:40px;border-radius:4px;background:#1b2336"></div><svg style="position:absolute;left:174px;top:267px" width="30" height="22" viewBox="0 0 30 22"><rect x="0" y="0" width="30" height="22" fill="#10141e"/><rect x="2" y="2" width="26" height="20" fill="#4b5160"/><rect x="4" y="10" width="4" height="12" fill="#1f7a3a"/><rect x="12.5" y="15" width="4" height="7" fill="#7a2a34"/><rect x="21.5" y="6" width="4" height="16" fill="#1f5fae"/></svg><svg style="position:absolute;left:0;top:269px" width="8" height="20" viewBox="0 0 8 20"><rect x="0" y="0" width="8" height="20" fill="#10141e"/><rect x="0" y="2" width="5" height="5" fill="#9aa0aa"/><rect x="0" y="8" width="7" height="3" fill="#c08a3a"/><rect x="0" y="12" width="5" height="5" fill="#9aa0aa"/><rect x="0" y="1" width="6" height="1" fill="#2a8a4a"/></svg><svg style="position:absolute;left:370px;top:272px" width="8" height="16" viewBox="0 0 8 16"><circle cx="8" cy="8" r="6" fill="none" stroke="#555b66" stroke-width="2"/></svg></div></div>
    <div class="body">
      <div class="title" style="color:#7c86ff">C.R.A.C.K Project Frontend</div>
      <div class="tags"><div class="tag"><span>Next.js</span></div><div class="tag"><span>Tailwind CSS</span></div><div class="tag"><span>Axios</span></div><div class="tag"><span>TypeScript</span></div></div>
      <div class="desc"><span>Frontend development for C.R.A.C.K educational platform featuring role-based access control, dynamic course management, and responsive user interfaces.</span></div>
      <div class="role"><span>Role: Frontend Developer</span></div>
    </div>
    <div class="btn1"></div><div class="btn2"></div>
  </div>
  <div class="card" style="left:1399px">
    <div class="img" id="img4"><svg width="378" height="288" viewBox="0 0 378 288" style="display:block"><rect width="378" height="288" fill="#ffffff"/><rect width="378" height="16" fill="#231d2e"/><rect x="141" y="0" width="18" height="0.8" fill="#1a73e8"/><rect x="7.1" y="6.5" width="0.6" height="3.5" fill="#6b6377"/><rect x="21.7" y="6.5" width="0.6" height="3.5" fill="#6b6377"/><rect x="40.4" y="6.5" width="0.6" height="3.5" fill="#6b6377"/><rect x="60.6" y="6.5" width="0.6" height="3.5" fill="#6b6377"/><rect x="80.5" y="6.5" width="0.6" height="3.5" fill="#6b6377"/><rect x="100.5" y="6.5" width="0.6" height="3.5" fill="#6b6377"/><rect x="120.0" y="6.5" width="0.6" height="3.5" fill="#6b6377"/><rect x="140.0" y="6.5" width="0.6" height="3.5" fill="#6b6377"/><rect x="160.5" y="6.5" width="0.6" height="3.5" fill="#6b6377"/><rect x="178.0" y="6.5" width="0.6" height="3.5" fill="#6b6377"/><rect x="197.0" y="6.5" width="0.6" height="3.5" fill="#6b6377"/><rect x="219.0" y="6.5" width="0.6" height="3.5" fill="#6b6377"/><rect x="238.0" y="6.5" width="0.6" height="3.5" fill="#6b6377"/><rect x="258.0" y="6.5" width="0.6" height="3.5" fill="#6b6377"/><rect x="277.0" y="6.5" width="0.6" height="3.5" fill="#6b6377"/><rect x="296.0" y="6.5" width="0.6" height="3.5" fill="#6b6377"/><rect x="315.0" y="6.5" width="0.6" height="3.5" fill="#6b6377"/><rect x="334.0" y="6.5" width="0.6" height="3.5" fill="#6b6377"/><rect x="11.5" y="5.5" width="5.0" height="5.0" rx="0.6" fill="#f46a54"/><rect x="31.0" y="5.5" width="5.0" height="5.0" rx="0.6" fill="#ffffff"/><rect x="31.5" y="6.2" width="4" height="3.6" fill="#333"/><rect x="50.5" y="5.5" width="5.0" height="5.0" rx="0.6" fill="#34a853"/><rect x="51" y="7.3" width="4.2" height="0.9" fill="#fff"/><rect x="52.3" y="5.8" width="0.9" height="4.3" fill="#fff"/><rect x="70.8" y="5.8" width="4.5" height="4.5" rx="0.6" fill="#4a56d6"/><rect x="90.5" y="5.5" width="5.0" height="5.0" rx="0.6" fill="#4285f4"/><path d="M110 10.5l2-4 2 4M111 6.5l3 4.5" stroke="#21c0d8" stroke-width="1.3" fill="none"/><circle cx="114" cy="9" r="1.6" fill="#1bb24a"/><rect x="128.9" y="5.5" width="5.0" height="5.0" rx="0.6" fill="#000"/><text x="131.4" y="9.8" font-size="4.5" text-anchor="middle" fill="#ddd" font-family="Liberation Sans">V</text><circle cx="151" cy="8" r="2.6" fill="#fff"/><circle cx="151" cy="8" r="1.4" fill="#231d2e"/><circle cx="171" cy="8" r="2.7" fill="#fff"/><circle cx="171" cy="8" r="1.8" fill="#ea4335"/><path d="M171 8h1.8" stroke="#4285f4" stroke-width="1"/><text x="186" y="10.3" font-size="6" fill="#10a56f" font-weight="bold" font-family="Liberation Sans">W</text><path d="M207 10.5V6l2.7 2 2.7-2v4.5" stroke="#ea4335" stroke-width="1.2" fill="none"/><rect x="226.5" y="6" width="5" height="3.5" fill="#1a73e8"/><rect x="226" y="9.5" width="6" height="1.2" fill="#0d47a1"/><path d="M246 7h4M248 8v3" stroke="#23402e" stroke-width="1.4"/><circle cx="268" cy="8" r="3.2" fill="none" stroke="#8466b8" stroke-width="0.6" stroke-dasharray="2 0.8"/><rect x="266.3" y="6.2" width="3.4" height="3.6" fill="#c9cdf3"/><circle cx="286.8" cy="8" r="2.8" fill="#f5c518"/><circle cx="286.8" cy="8" r="1.5" fill="none" stroke="#8a6a00" stroke-width="0.5"/><circle cx="306" cy="8" r="2.6" fill="#fff"/><circle cx="306" cy="8" r="1.4" fill="#231d2e"/><circle cx="325" cy="8" r="2.7" fill="#fff"/><circle cx="325" cy="8" r="1.8" fill="#34a853"/><path d="M325 8h1.8" stroke="#4285f4" stroke-width="1"/><path d="M333 16c2 0 3-1 3-3V5c0-2 1.5-3 3-3h14c1.5 0 3 1 3 3v8c0 2 1 3 3 3z" fill="#3f3650"/><path d="M346.8 6.7l2.6 2.6M349.4 6.7l-2.6 2.6" stroke="#ddd" stroke-width="0.6"/><path d="M363 6.2v3.6M361.2 8h3.6" stroke="#bbb" stroke-width="0.6"/><rect y="16" width="378" height="19" fill="#3f3650"/><rect x="-10" y="18.2" width="388" height="13.8" rx="6.9" fill="#2b2336"/><text x="0.0" y="26.8" font-size="5.00" fill="#e6e1ec" text-anchor="start" font-weight="normal" font-family="Liberation Sans">cumenter.getpostman.com/view/41201347/2sB2x6kVW5</text><circle cx="377" cy="25" r="0.8" fill="#ddd"/><text x="0.0" y="44.6" font-size="4.80" fill="#f26b3a" text-anchor="start" font-weight="normal" font-family="Liberation Sans">ironment</text><path d="M24.5 43l1.5 1.5 1.5-1.5" stroke="#999" stroke-width="0.5" fill="none"/><text x="40.0" y="44.6" font-size="4.80" fill="#555" text-anchor="start" font-weight="normal" font-family="Liberation Sans">LAYOUT</text><text x="67.5" y="44.6" font-size="4.80" fill="#f26b3a" text-anchor="start" font-weight="normal" font-family="Liberation Sans">Double Column</text><path d="M107.5 43l1.5 1.5 1.5-1.5" stroke="#999" stroke-width="0.5" fill="none"/><text x="122.0" y="44.6" font-size="4.80" fill="#555" text-anchor="start" font-weight="normal" font-family="Liberation Sans">LANGUAGE</text><text x="158.0" y="44.6" font-size="4.80" fill="#f26b3a" text-anchor="start" font-weight="normal" font-family="Liberation Sans">cURL - cURL</text><path d="M191.5 43l1.5 1.5 1.5-1.5" stroke="#999" stroke-width="0.5" fill="none"/><circle cx="205.6" cy="43" r="2" fill="none" stroke="#777" stroke-width="0.6"/><path d="M372.5 40.8a2.3 2.3 0 1 0 1.5 3.6a2 2 0 0 1-1.5-3.6z" fill="#555"/><rect x="0" y="51" width="37" height="237" fill="#f8f8f8"/><rect x="0" y="59" width="28" height="12.6" fill="#eeeeee"/><text stroke="#1a1a1a" stroke-width="0.3" x="48.8" y="69.5" font-size="10.00" fill="#1a1a1a" text-anchor="start" font-weight="normal" font-family="Liberation Sans">Transaction</text><text x="46.7" y="100.8" font-size="6.30" fill="#b8901a" text-anchor="start" font-weight="bold" font-family="Liberation Sans">POST</text><text x="71.0" y="100.8" font-size="6.30" fill="#1a1a1a" text-anchor="start" font-weight="bold" font-family="Liberation Sans">Create Transaction</text><path d="M224.5 96.5v3.5h3v-3.5M226 95v3M225 96l1-1 1 1" stroke="#555" stroke-width="0.5" fill="none"/><rect x="46.7" y="114" width="181" height="14.6" fill="#f7f7f7"/><text x="49.5" y="123.6" font-size="4.10" fill="#333" text-anchor="start" font-weight="normal" font-family="Liberation Sans">{{baseurl}}/transactions/{{walletId}}?type=transfer&amp;page=1</text><text x="46.7" y="145.0" font-size="5.20" fill="#1a1a1a" text-anchor="start" font-weight="bold" font-family="Liberation Sans">AUTHORIZATION</text><text x="96.7" y="145.0" font-size="5.00" fill="#999" text-anchor="start" font-weight="normal" font-family="Liberation Sans">Bearer Token</text><text x="47.0" y="161.2" font-size="4.90" fill="#333" text-anchor="start" font-weight="normal" font-family="Liberation Sans">Token</text><text x="112.3" y="161.2" font-size="4.90" fill="#333" text-anchor="start" font-weight="normal" font-family="Liberation Sans">&lt;token&gt;</text><text x="47.0" y="183.6" font-size="5.60" fill="#1a1a1a" text-anchor="start" font-weight="bold" font-family="Liberation Sans">HEADERS</text><text x="47.0" y="207.8" font-size="4.90" fill="#333" text-anchor="start" font-weight="normal" font-family="Liberation Sans">Content-Type</text><text x="112.3" y="207.8" font-size="4.90" fill="#6a4a20" text-anchor="start" font-weight="normal" font-family="Liberation Sans">application/json</text><text x="47.0" y="230.0" font-size="5.50" fill="#1a1a1a" text-anchor="start" font-weight="bold" font-family="Liberation Sans">Body</text><text x="64.0" y="230.0" font-size="5.00" fill="#999" text-anchor="start" font-weight="normal" font-family="Liberation Sans">raw (json)</text><rect x="47" y="231.5" width="191" height="0.5" fill="#e8e8e8"/><rect x="46.8" y="251.5" width="182" height="40" fill="#fff" stroke="#eeeeee" stroke-width="0.6"/><rect x="50.4" y="254" width="19" height="14.3" rx="1.5" fill="#f0f0f0"/><text x="54.0" y="263.2" font-size="5.00" fill="#333" text-anchor="start" font-weight="normal" font-family="Liberation Sans">json</text><path d="M201 258h4M201 260h4M201 262h2.5" stroke="#666" stroke-width="0.5"/><circle cx="220" cy="261" r="2" fill="none" stroke="#666" stroke-width="0.6"/><text x="53.0" y="280.5" font-size="5.00" fill="#555" text-anchor="start" font-weight="normal" font-family="Liberation Mono">{</text><text x="64.5" y="288.5" font-size="5.00" fill="#c03030" text-anchor="start" font-weight="normal" font-family="Liberation Mono">&quot;type&quot;: &quot;transfer&quot;,</text><rect x="238.2" y="51.2" width="140" height="32.2" fill="#2c2c2c"/><rect x="238.2" y="90" width="140" height="198" fill="#2d2d2d"/><text x="244.5" y="103.5" font-size="6.20" fill="#f2f2f2" text-anchor="start" font-weight="normal" font-family="Liberation Sans">Example Request</text><rect x="376" y="100" width="1.2" height="2.2" fill="#ccc"/><rect x="244.9" y="116" width="140" height="91" rx="3" fill="#212121"/><rect x="248" y="118.8" width="18" height="14.6" rx="1.5" fill="#2b2b2b"/><text x="251.5" y="127.8" font-size="4.80" fill="#aaa" text-anchor="start" font-weight="normal" font-family="Liberation Sans">curl</text><text x="250.0" y="144.3" font-size="4.60" fill="#888" text-anchor="start" font-weight="normal" font-family="Liberation Mono">curl --location -g </text><text x="302.4" y="144.3" font-size="4.60" fill="#b5d86a" text-anchor="start" font-weight="normal" font-family="Liberation Mono">&#x27;{{baseurl}}/transactions/m</text><text x="250.0" y="151.7" font-size="4.60" fill="#aaa" text-anchor="start" font-weight="normal" font-family="Liberation Mono">--header </text><text x="274.8" y="151.7" font-size="4.60" fill="#b5d86a" text-anchor="start" font-weight="normal" font-family="Liberation Mono">&#x27;Content-Type: application/json&#x27; \</text><text x="250.0" y="159.1" font-size="4.60" fill="#888" text-anchor="start" font-weight="normal" font-family="Liberation Mono">--data </text><text x="269.3" y="159.1" font-size="4.60" fill="#ccc" text-anchor="start" font-weight="normal" font-family="Liberation Mono">&#x27;{</text><text x="263.6" y="166.6" font-size="4.60" fill="#f0506e" text-anchor="start" font-weight="normal" font-family="Liberation Mono">&quot;type&quot;</text><text x="280.2" y="166.6" font-size="4.60" fill="#ccc" text-anchor="start" font-weight="normal" font-family="Liberation Mono">: </text><text x="285.7" y="166.6" font-size="4.60" fill="#d8d86a" text-anchor="start" font-weight="normal" font-family="Liberation Mono">&quot;transfer&quot;,</text><text x="263.6" y="174.2" font-size="4.60" fill="#f0506e" text-anchor="start" font-weight="normal" font-family="Liberation Mono">&quot;amount&quot;</text><text x="285.7" y="174.2" font-size="4.60" fill="#ccc" text-anchor="start" font-weight="normal" font-family="Liberation Mono">: </text><text x="291.2" y="174.2" font-size="4.60" fill="#8a9cf0" text-anchor="start" font-weight="normal" font-family="Liberation Mono">5000,</text><text x="263.6" y="181.5" font-size="4.60" fill="#f0506e" text-anchor="start" font-weight="normal" font-family="Liberation Mono">&quot;description&quot;</text><text x="299.5" y="181.5" font-size="4.60" fill="#ccc" text-anchor="start" font-weight="normal" font-family="Liberation Mono">: </text><text x="305.0" y="181.5" font-size="4.60" fill="#d8d86a" text-anchor="start" font-weight="normal" font-family="Liberation Mono">&quot;transfer&quot;,</text><text x="263.6" y="189.0" font-size="4.60" fill="#f0506e" text-anchor="start" font-weight="normal" font-family="Liberation Mono">&quot;fromAccountId&quot;</text><text x="305.0" y="189.0" font-size="4.60" fill="#ccc" text-anchor="start" font-weight="normal" font-family="Liberation Mono">: </text><text x="310.5" y="189.0" font-size="4.60" fill="#d8d86a" text-anchor="start" font-weight="normal" font-family="Liberation Mono">&quot;cmjbs7uzc0002yfru0n5ih&quot;,</text><text x="263.6" y="196.5" font-size="4.60" fill="#f0506e" text-anchor="start" font-weight="normal" font-family="Liberation Mono">&quot;toAccountId&quot;</text><text x="299.5" y="196.5" font-size="4.60" fill="#ccc" text-anchor="start" font-weight="normal" font-family="Liberation Mono">: </text><text x="305.0" y="196.5" font-size="4.60" fill="#d8d86a" text-anchor="start" font-weight="normal" font-family="Liberation Mono">&quot;cmjbu7r0e0000fmrul1d4dcnx&quot;</text><text x="250.0" y="203.5" font-size="4.60" fill="#888" text-anchor="start" font-weight="normal" font-family="Liberation Mono">}&#x27;</text><defs><linearGradient id="fade" x1="0" y1="0" x2="0" y2="1"><stop offset="0" stop-color="#212121" stop-opacity="0"/><stop offset="1" stop-color="#212121" stop-opacity="0.9"/></linearGradient></defs><rect x="244.9" y="176" width="140" height="31" fill="url(#fade)"/><rect x="322.7" y="195.5" width="31.6" height="9.8" rx="4.9" fill="#1b1b1b"/><text x="338.5" y="202.3" font-size="5.00" fill="#ffffff" text-anchor="middle" font-weight="bold" font-family="Liberation Sans">View More</text><text x="244.8" y="225.0" font-size="6.20" fill="#f2f2f2" text-anchor="start" font-weight="normal" font-family="Liberation Sans">Example Response</text><text x="244.8" y="239.0" font-size="5.20" fill="#f2f2f2" text-anchor="start" font-weight="normal" font-family="Liberation Sans">Body</text><text x="265.6" y="239.0" font-size="5.20" fill="#999" text-anchor="start" font-weight="normal" font-family="Liberation Sans">Headers (0)</text><rect x="244.8" y="243" width="11.4" height="0.9" fill="#e0603a"/><rect x="244.8" y="250" width="140" height="40" fill="#262626"/><text x="338.2" y="281.5" font-size="4.80" fill="#aaa" text-anchor="middle" font-weight="normal" font-family="Liberation Sans">No response body</text></svg></div>
    <div class="body">
      <div class="title">Milestone 4 Backend</div>
      <div class="tags"><div class="tag"><span>Nest.js</span></div><div class="tag"><span>TypeScript</span></div><div class="tag"><span>PostgreSQL</span></div><div class="tag"><span>PrismaORM</span></div><div class="tag"><span>JWT</span></div><div class="tag"><span>Railway</span></div></div>
      <div class="desc"><span>Shop for products online with a modern and intuitive user interface.</span></div>
      <div class="role"><span>Role: Backend Developer</span></div>
    </div>
    <div class="btn1"></div><div class="btn2"></div>
  </div>

  <div id="nav">
    <div class="navlink" style="left:737px">Home</div>
    <div class="navlink" style="left:842px">About</div>
    <div class="navlink" style="left:962px">Projects</div>
    <div class="navlink" style="left:1125px">Contact</div>
    <div class="sbtn" style="left:1723px"></div>
    <div class="sbtn" style="left:1795px"></div>
    <div style="position:absolute;left:48px;top:18px;width:60px;height:60px;border-radius:30px;border:3px solid #6366f1;overflow:hidden;background:#fddf3b"><svg width="54" height="54" viewBox="0 -45 378 378" style="display:block"><defs><clipPath id="uclip2"><path d="M70.69999999999999 45.7V178.7A92 92 0 0 0 254.7 178.7V45.7H208.7V178.7A46 46 0 0 1 116.69999999999999 178.7V45.7Z" transform="rotate(32 162.7 178.7)"/></clipPath></defs><circle cx="189" cy="144" r="189" fill="#fddf3b"/><path d="M70.69999999999999 45.7V178.7A92 92 0 0 0 254.7 178.7V45.7H208.7V178.7A46 46 0 0 1 116.69999999999999 178.7V45.7Z" transform="rotate(32 162.7 178.7)" fill="#e4c73c"/><g fill="#b49f2d"><rect x="83" y="52" width="17" height="80.4"/><path d="M83 52H121A23 23 0 0 1 121 98H83ZM100 67H117A8.5 8.5 0 0 1 117 84H100Z" fill-rule="evenodd"/><path d="M109 97L128 97L146.3 132.4L126.9 132.4Z"/><rect x="207" y="52" width="73" height="15.5"/><rect x="207" y="83" width="73" height="16.5"/><rect x="207" y="114.5" width="73" height="16.5"/><path d="M75.2 172.3L95.1 172.3L115 224.6L135.4 172.3L153.9 172.3L121.5 252.8L106.7 252.8Z"/><path d="M244.8 169.8a43 43 0 1 0 0.01 0ZM244.8 187.3a25.5 25.5 0 1 1-0.01 0Z" fill-rule="evenodd"/></g><g fill="#000" clip-path="url(#uclip2)"><rect x="83" y="52" width="17" height="80.4"/><path d="M83 52H121A23 23 0 0 1 121 98H83ZM100 67H117A8.5 8.5 0 0 1 117 84H100Z" fill-rule="evenodd"/><path d="M109 97L128 97L146.3 132.4L126.9 132.4Z"/><rect x="207" y="52" width="73" height="15.5"/><rect x="207" y="83" width="73" height="16.5"/><rect x="207" y="114.5" width="73" height="16.5"/><path d="M75.2 172.3L95.1 172.3L115 224.6L135.4 172.3L153.9 172.3L121.5 252.8L106.7 252.8Z"/><path d="M244.8 169.8a43 43 0 1 0 0.01 0ZM244.8 187.3a25.5 25.5 0 1 1-0.01 0Z" fill-rule="evenodd"/></g></svg></div><div style="position:absolute;left:126px;top:33px;font-size:27px;-webkit-text-stroke:0.6px transparent;line-height:36px;font-family:'Liberation Mono',monospace;background:linear-gradient(to right,#6470f2,#22c5b0);-webkit-background-clip:text;background-clip:text;color:transparent">Perhisi</div><svg style="position:absolute;left:1735px;top:32.5px" width="31" height="31" viewBox="0 0 24 24" fill="none" stroke="#000" stroke-width="2" stroke-linecap="round" stroke-linejoin="round"><path d="M15 22v-4a4.8 4.8 0 0 0-1-3.5c3 0 6-2 6-5.5.08-1.25-.27-2.48-1-3.5.28-1.15.28-2.35 0-3.5 0 0-1 0-3 1.5-2.64-.5-5.36-.5-8 0C6 2 5 2 5 2c-.3 1.15-.3 2.35 0 3.5A5.403 5.403 0 0 0 4 9c0 3.5 3 5.5 6 5.5-.39.49-.68 1.05-.85 1.65-.17.6-.22 1.23-.15 1.85v4"/><path d="M9 18c-4.51 2-5-2-7-2"/></svg><svg style="position:absolute;left:1807px;top:33px" width="30" height="30" viewBox="0 0 24 24" fill="none" stroke="#000" stroke-width="2.1" stroke-linecap="round" stroke-linejoin="round"><path d="M16 8a6 6 0 0 1 6 6v7h-4v-7a2 2 0 0 0-2-2 2 2 0 0 0-2 2v7h-4v-7a6 6 0 0 1 6-6z"/><rect width="4" height="12" x="2" y="9"/><circle cx="4" cy="4" r="2"/></svg>
  </div>
</div>
<div class="abs" style="left:1897px;top:131px;width:23px;height:949px;background:#2c2c2c"></div>
<svg class="abs" style="left:1897px;top:131px" width="23" height="949" viewBox="0 0 23 949"><path d="M11.5 8L19.5 16H3.5Z" fill="#a3a3a3"/><rect x="5" y="364" width="13" height="65" rx="6.5" fill="#a3a3a3"/><path d="M3.5 931.8H19.5L11.5 939.8Z" fill="#a3a3a3"/></svg>
<div class="abs" style="left:0;top:1078px;width:1920px;height:2px;background:#1b1a20"></div>
<div class="abs" style="left:72px;top:1078px;width:432px;height:2px;background:#5c5c58"></div>
<div class="abs" style="left:656px;top:1078px;width:73px;height:2px;background:#4a4454"></div>
</body></html>
